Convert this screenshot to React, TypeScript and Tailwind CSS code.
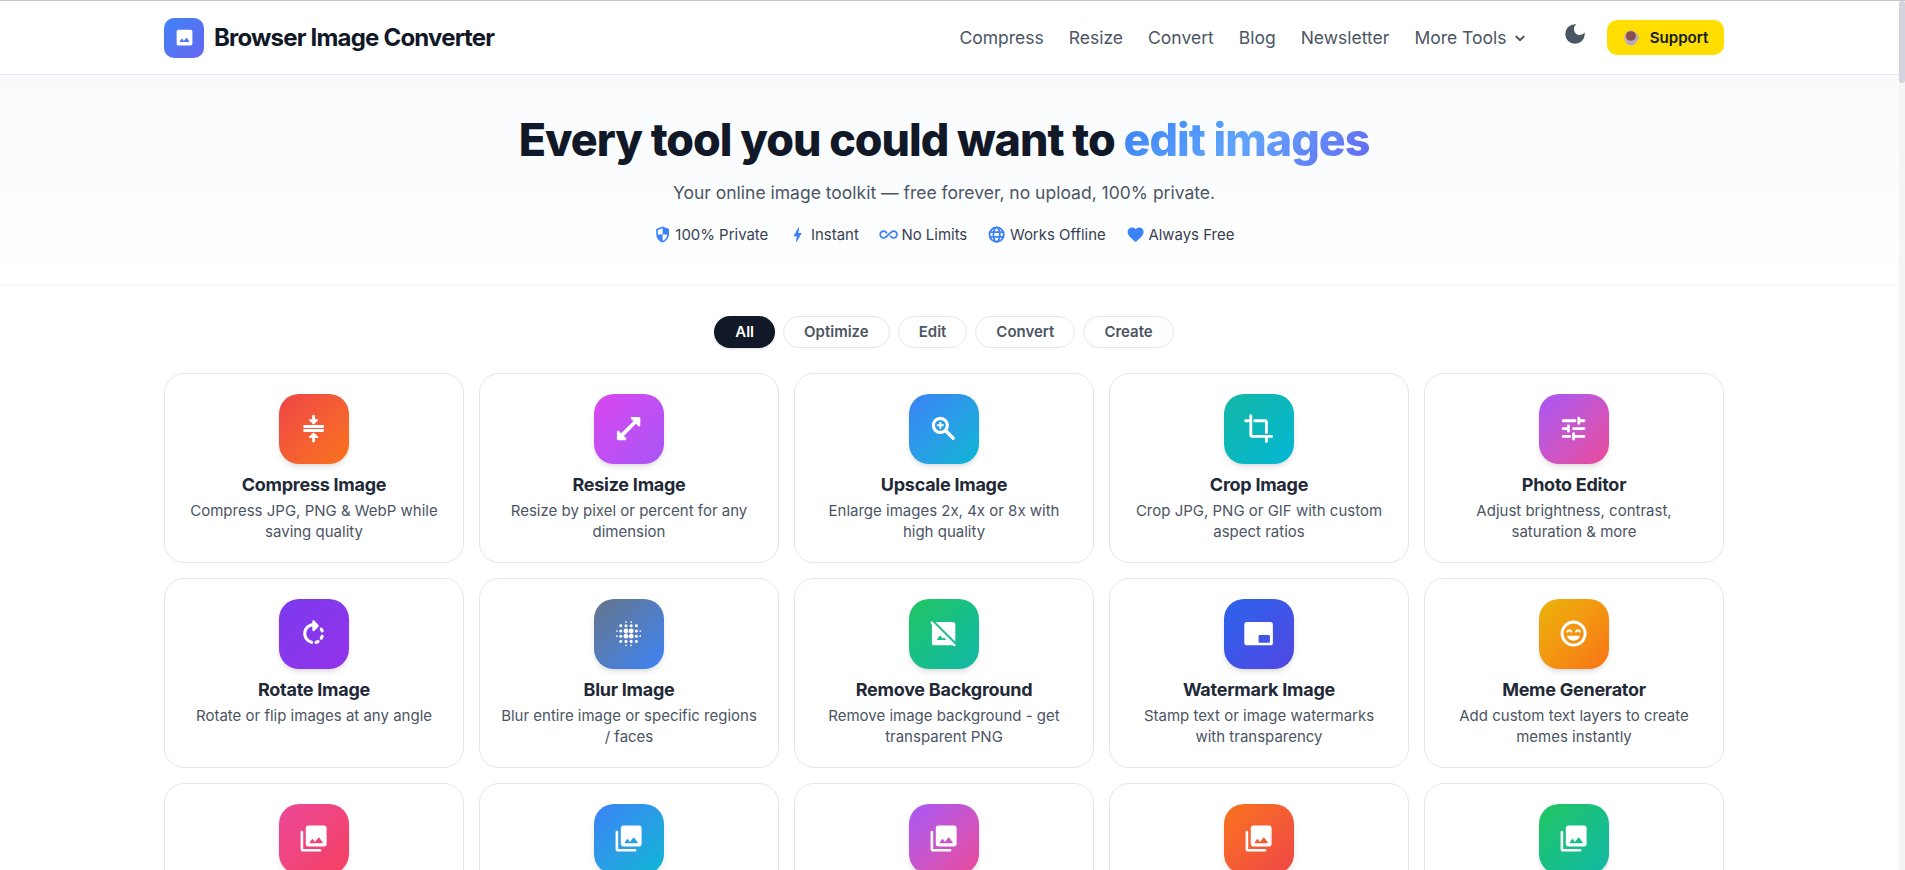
import React from "react";
import type { ReactNode } from "react";

const Svg = ({ size = 31.2, children, className = "" }: { size?: number; children: ReactNode; className?: string }) => (
  <svg width={size} height={size} viewBox="0 0 24 24" fill="currentColor" className={className} aria-hidden="true">{children}</svg>
);

const line = { fill: "none", stroke: "currentColor", strokeWidth: 2.2, strokeLinecap: "round" as const, strokeLinejoin: "round" as const };

const Photo = ({ size }: { size?: number }) => (
  <Svg size={size}><path fillRule="evenodd" d="M5 3h14a2 2 0 0 1 2 2v14a2 2 0 0 1-2 2H5a2 2 0 0 1-2-2V5a2 2 0 0 1 2-2Zm2 14h10a.5.5 0 0 0 .4-.8l-2.75-3.67a.5.5 0 0 0-.8 0L11.25 16l-1.85-2.47a.5.5 0 0 0-.8 0l-2 2.67A.5.5 0 0 0 7 17Z" /></Svg>
);

const dots = [[10,3,.65],[14,3,.65],[6,6,1.15],[10,6,1.2],[14,6,1.2],[18,6,1.15],[3,10,.65],[6,10,1.2],[10,10,1.85],[14,10,1.85],[18,10,1.2],[21,10,.65],[3,14,.65],[6,14,1.2],[10,14,1.85],[14,14,1.85],[18,14,1.2],[21,14,.65],[6,18,1.15],[10,18,1.2],[14,18,1.2],[18,18,1.15],[10,21,.65],[14,21,.65]];

const icons: Record<string, ReactNode> = {
  compress: <Svg><g {...line}><path d="M5 10.4h14M5 13.5h14" /><path d="M12 2.4V5M12 21.6V19" /></g><path d="M8.900 4.800h6.200a.5.5 0 0 1 .350.850l-3.100 3.100a.5.5 0 0 1-.7 0l-3.100-3.100A.5.5 0 0 1 8.900 4.800ZM8.900 19.200h6.200a.5.5 0 0 0 .350-.850l-3.100-3.100a.5.5 0 0 0-.7 0l-3.100 3.100a.5.5 0 0 0 .350.850Z" /></Svg>,
  resize: <Svg><path d="m6 18 12-12" fill="none" stroke="currentColor" strokeWidth="2.800" /><path d="M14.700 3H20a1 1 0 0 1 1 1v5.300c0 .900-1.080 1.330-1.700.700L14 4.700c-.630-.620-.2-1.700.700-1.700ZM9.300 21H4a1 1 0 0 1-1-1v-5.300c0-.9 1.080-1.330 1.700-.7l5.300 5.300c.630.620.2 1.700-.7 1.700Z" /></Svg>,
  zoom: <Svg><g {...line}><circle cx="9.500" cy="9.500" r="5.400" strokeWidth="2.400" /><path d="m14.200 14.200 5.200 5.200" strokeWidth="2.600" /><path d="M9.500 7.500v4M7.500 9.500h4" strokeWidth="1.500" /></g></Svg>,
  crop: <Svg><g {...line}><path d="M6 2v15a1 1 0 0 0 1 1h15M2 6h2M9 6h8a1 1 0 0 1 1 1v8M18 19v3" /></g></Svg>,
  tune: <Svg><g {...line}><path d="M4 6h9M17 6h3M16 4v4M4 12h4M8 10v4M12 12h8M4 18h5M12 16v4M13 18h7" /></g></Svg>,
  rotate: <Svg><g {...line} strokeWidth={2.4}><path d="M10.400 18.700A6.900 6.900 0 0 1 12 5.100h1" /><path d="M13.900 18.700a7 7 0 0 0 1.500-.6M17.900 15.600a7 7 0 0 0 .7-1.500M18.600 9.900a7 7 0 0 0-.7-1.400" /></g><path d="M11 2.600c0-.8.950-1.200 1.500-.650L15.700 5.300a1 1 0 0 1 0 1.400l-3.200 3.250c-.550.550-1.500.160-1.500-.650Z" /></Svg>,
  blur: <Svg>{dots.map(([x, y, r]) => <circle key={`${x}-${y}`} cx={x} cy={y} r={r} />)}</Svg>,
  nobg: <Svg><path d="M5.800 3H19a2 2 0 0 1 2 2v13.200L5.800 3Z" /><path fillRule="evenodd" d="M3 3.600 20.400 21H5a2 2 0 0 1-2-2V3.600ZM7.500 17h6.700l-2-2-.9.9-1.500-2a.5.5 0 0 0-.8 0l-1.900 2.300a.5.5 0 0 0 .4.800Z" /><path {...line} strokeWidth="1.800" d="M2.900 3.500 20.400 21" /></Svg>,
  pip: <Svg><path fillRule="evenodd" d="M3 3h18a2 2 0 0 1 2 2v14a2 2 0 0 1-2 2H3a2 2 0 0 1-2-2V5a2 2 0 0 1 2-2Zm10 10a1 1 0 0 0-1 1v4a1 1 0 0 0 1 1h6.700a1 1 0 0 0 1-1v-4a1 1 0 0 0-1-1Z" /></Svg>,
  smile: <Svg><circle cx="12" cy="12" r="8.900" {...line} /><path d="M7 13.700h10a5.200 5.200 0 0 1-10 0Z" /><path {...line} strokeWidth="1.600" d="M7.200 10.500c.7-1.500 2.300-1.500 3 0M13.800 10.500c.7-1.500 2.300-1.500 3 0" /></Svg>,
  library: <Svg><path fillRule="evenodd" d="M8 2h12a2 2 0 0 1 2 2v12a2 2 0 0 1-2 2H8a2 2 0 0 1-2-2V4a2 2 0 0 1 2-2Zm1.500 13.600h9a.5.5 0 0 0 .4-.8l-2.500-3.400a.5.5 0 0 0-.8 0L13 14.600l-1.500-2a.5.5 0 0 0-.8 0L9.100 14.800a.5.5 0 0 0 .4.800Z" /><path {...line} strokeWidth="2" d="M3 7v13a1 1 0 0 0 1 1h13" /></Svg>,
};

type Tool = { icon: string; title: string; text: string; tint: string };
const tools: Tool[] = [
  { icon: "compress", title: "Compress Image", text: "Compress JPG, PNG & WebP while saving quality", tint: "from-[#ef4444] to-[#f97316]" },
  { icon: "resize", title: "Resize Image", text: "Resize by pixel or percent for any dimension", tint: "from-[#d946ef] to-[#a855f7]" },
  { icon: "zoom", title: "Upscale Image", text: "Enlarge images 2x, 4x or 8x with high quality", tint: "from-[#3b82f6] to-[#06b6d4]" },
  { icon: "crop", title: "Crop Image", text: "Crop JPG, PNG or GIF with custom aspect ratios", tint: "from-[#14b8a6] to-[#06b6d4]" },
  { icon: "tune", title: "Photo Editor", text: "Adjust brightness, contrast, saturation & more", tint: "from-[#a855f7] to-[#ec4899]" },
  { icon: "rotate", title: "Rotate Image", text: "Rotate or flip images at any angle", tint: "from-[#7c3aed] to-[#9333ea]" },
  { icon: "blur", title: "Blur Image", text: "Blur entire image or specific regions / faces", tint: "from-[#64748b] to-[#3b82f6]" },
  { icon: "nobg", title: "Remove Background", text: "Remove image background - get transparent PNG", tint: "from-[#22c55e] to-[#14b8a6]" },
  { icon: "pip", title: "Watermark Image", text: "Stamp text or image watermarks with transparency", tint: "from-[#2563eb] to-[#4f46e5]" },
  { icon: "smile", title: "Meme Generator", text: "Add custom text layers to create memes instantly", tint: "from-[#eab308] to-[#f97316]" },
  { icon: "library", title: "", text: "", tint: "from-[#ec4899] to-[#f43f5e]" },
  { icon: "library", title: "", text: "", tint: "from-[#3b82f6] to-[#06b6d4]" },
  { icon: "library", title: "", text: "", tint: "from-[#a855f7] to-[#ec4899]" },
  { icon: "library", title: "", text: "", tint: "from-[#f97316] to-[#ef4444]" },
  { icon: "library", title: "", text: "", tint: "from-[#22c55e] to-[#14b8a6]" },
];

const features: [string, ReactNode][] = [
  ["100% Private", <Svg size={19.2} key="s"><path fillRule="evenodd" d="m12 2 8 3v6c0 5-3.300 9.600-8 11-4.700-1.400-8-6-8-11V5Zm0 2.100L6 6.400V12h6Zm0 7.900v7.900c3.200-1.100 5.500-4.200 5.900-7.900Z" /></Svg>],
  ["Instant", <Svg size={19.2} key="i"><path d="M11 21h-1l1-7H7.500c-.6 0-.6-.3-.4-.7L13 3h1l-1 7h3.500c.5 0 .6.300.4.700Z" /></Svg>],
  ["No Limits", <Svg size={19.2} key="n"><path {...line} d="m9.500 9.800-.9-.8a4.200 4.200 0 1 0 0 6l6.800-6a4.200 4.200 0 1 1 0 6l-.9-.8" /></Svg>],
  ["Works Offline", <Svg size={19.2} key="w"><g {...line}><circle cx="12" cy="12" r="9" /><ellipse cx="12" cy="12" rx="4" ry="9" /><path d="M3.500 9h17M3.500 15h17" /></g></Svg>],
  ["Always Free", <Svg size={19.2} key="a"><path d="M12 21c-.4 0-.7-.1-1-.4C5.500 15.700 2 12.900 2 8.500A5.400 5.400 0 0 1 7.500 3c1.700 0 3.400.8 4.500 2.100A6 6 0 0 1 16.500 3 5.400 5.400 0 0 1 22 8.500c0 4.400-3.500 7.200-9 12.100-.3.300-.6.400-1 .4Z" /></Svg>],
];

export default function App() {
  return (
    <div className="flex h-[870px] overflow-hidden border-t border-[#c6c6c6] bg-white font-['Inter',sans-serif]">
      <div className="min-w-0 flex-1">
        <header className="h-[74px] border-b border-[#e5e7eb] bg-white pr-[11px]">
          <div className="mx-auto flex h-full w-[1560px] items-center justify-between">
            <div className="flex items-center gap-2.5">
              <div className="flex size-10 items-center justify-center rounded-[10px] bg-linear-135 from-[#3b82f6] to-[#6366f1] text-white"><Photo size={21} /></div>
              <span className="text-2xl font-bold tracking-[-0.810px] text-[#111827]">Browser Image Converter</span>
            </div>
            <nav className="flex items-center text-[17.500px] text-[#4b5563]">
              <div className="flex items-center gap-[25px] pt-px">
                <span>Compress</span><span>Resize</span><span>Convert</span><span>Blog</span><span>Newsletter</span>
                <span className="flex items-center gap-1">More Tools<Svg size={18}><path {...line} strokeWidth="2.400" d="m7 10 5 5 5-5" /></Svg></span>
              </div>
              <Svg size={26} className="mb-2 ml-[33px]"><path d="M12 3a9 9 0 1 0 9 9c0-.460-.04-.920-.1-1.360a5.390 5.390 0 0 1-4.400 2.260 5.400 5.400 0 0 1-3.140-9.800C12.920 3.040 12.460 3 12 3Z" /></Svg>
              <button className="ml-[19.500px] flex h-[35px] w-[117px] items-center justify-center gap-[11px] rounded-[10px] bg-[#ffdd00] pt-px pl-px text-[15.100px] font-semibold text-[#111827]">
                <svg width="15" height="16" viewBox="0 0 15 16" aria-hidden="true"><circle cx="12.200" cy="7.500" r="2.200" fill="none" stroke="#b9a6c8" strokeWidth="1.200" /><path d="M.5 7a6.500 6.500 0 0 1 13 0c0 5-2.700 8.300-6.500 8.300S.5 12 .5 7Z" fill="#b9a6c8" /><ellipse cx="6.900" cy="6" rx="5" ry="4.800" fill="#88504b" /></svg>
                Support
              </button>
            </nav>
          </div>
        </header>
        <section className="h-[211px] border-b border-[#f3f4f6] bg-linear-to-b from-[#f8fafc] to-white pr-[11px] pt-9 text-center">
          <h1 className="text-[44.800px] leading-[58px] font-extrabold tracking-[-1px] text-[#111827]">Every tool you could want to <span className="bg-linear-135 from-[#3b82f6] via-[#60a5fa] to-[#6366f1] bg-clip-text text-transparent">edit images</span></h1>
          <p className="mt-2.5 text-[17.500px] leading-7 text-[#4b5563]">Your online image toolkit — free forever, no upload, 100% private.</p>
          <div className="mt-4 flex justify-center gap-5 pr-px text-[14.950px] leading-6 text-[#374151]">
            {features.map(([label, icon]) => <span key={label} className="flex items-center gap-[3.500px]"><span className="text-[#3b82f6]">{icon}</span>{label}</span>)}
          </div>
        </section>
        <main className="pr-[11px]">
          <div className="flex justify-center gap-2 pt-[30px] text-[15px] font-semibold text-[#4b5563]">
            <button className="h-8 rounded-full bg-[#111827] px-[21px] text-white shadow-sm">All</button>
            {["Optimize", "Edit", "Convert", "Create"].map((l) => <button key={l} className="h-8 rounded-full border border-[#e5e7eb] bg-white px-5">{l}</button>)}
          </div>
          <div className="mx-auto mt-[25px] grid w-[1560px] grid-cols-5 gap-[15px]">
            {tools.map((t, i) => (
              <article key={i} className="flex h-[190px] flex-col items-center rounded-[20px] border border-[#e5e7eb] bg-white px-5 pt-5 text-center">
                <div className={`flex size-[70px] shrink-0 items-center justify-center rounded-[20px] bg-linear-135 text-white shadow-md ${t.tint}`}>{icons[t.icon]}</div>
                <h2 className="mt-[9px] text-lg leading-[23px] font-bold tracking-[-0.260px] text-[#1f2937]">{t.title}</h2>
                <p className="mt-1 text-[15px] leading-[21px] text-[#4b5563]">{t.text}</p>
              </article>
            ))}
          </div>
        </main>
      </div>
      <div className="w-1.5 bg-[#f3f4f6]"><div className="h-[82px] rounded-full bg-[#d1d5db]" /></div>
    </div>
  );
}
